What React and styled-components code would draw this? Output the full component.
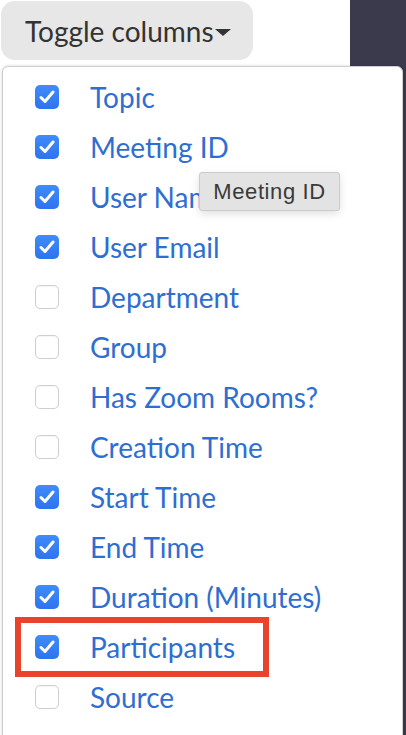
import React from "react";
import styled, { createGlobalStyle } from "styled-components";

const GlobalStyle = createGlobalStyle`
  html, body { margin: 0; padding: 0; background: #ffffff; }
  body { font-family: Lato, "Noto Sans", sans-serif; }
`;

const Page = styled.div`
  position: relative;
  display: flex;
  width: 406px;
  height: 735px;
  overflow: hidden;
  background: #ffffff;
`;

const Main = styled.div`
  flex: 1;
  display: flex;
  flex-direction: column;
  padding: 1px 0 0 1px;
`;

const Sidebar = styled.div`
  width: 56px;
  background: #3b3a4c;
`;

const ToggleButton = styled.button`
  display: flex;
  align-items: center;
  width: 252px;
  height: 59px;
  padding: 0 0 0 24px;
  border: none;
  border-radius: 14px;
  background: #e7e7e7;
  color: #333333;
  font-family: Lato, "Noto Sans", sans-serif;
  font-size: 28px;
  cursor: pointer;
`;

const Caret = styled.span`
  width: 0;
  height: 0;
  margin-left: 1px;
  margin-top: 3px;
  border-left: 8px solid transparent;
  border-right: 8px solid transparent;
  border-top: 7px solid #333333;
`;

const Menu = styled.ul`
  position: absolute;
  top: 66px;
  left: 2px;
  width: 399px;
  height: 680px;
  margin: 0;
  padding: 5px 0 0 0;
  list-style: none;
  background: #ffffff;
  border: 1px solid #cfcfcf;
  border-radius: 6px;
  box-shadow: 0 0 3px rgba(0, 0, 0, 0.18);
`;

const Item = styled.li`
  position: relative;
  display: flex;
  align-items: center;
  height: 50px;
  padding-left: 32px;
  gap: 31px;
  color: #2f6ed1;
  font-size: 28px;

  ${(p) =>
    p.$highlight &&
    `
    &::after {
      content: "";
      position: absolute;
      left: 12px;
      top: -5px;
      width: 242px;
      height: 48px;
      border: 6px solid #e9432b;
    }
  `}
`;

const Box = styled.span`
  display: flex;
  align-items: center;
  justify-content: center;
  flex: none;
  width: 24px;
  height: 24px;
  box-sizing: border-box;
  border-radius: 5px;
  background: ${(p) =>
    p.$checked ? "linear-gradient(#3f8cfa, #2f73ef)" : "#ffffff"};
  border: ${(p) => (p.$checked ? "none" : "1px solid #cfcfcf")};
  box-shadow: ${(p) =>
    p.$checked ? "none" : "inset 0 1px 1px rgba(0,0,0,0.04)"};
`;

const Label = styled.span`
  white-space: nowrap;
`;

const Tooltip = styled.div`
  position: absolute;
  left: 199px;
  top: 172px;
  width: 141px;
  height: 39px;
  box-sizing: border-box;
  display: flex;
  align-items: center;
  justify-content: center;
  background: #e3e3e3;
  border: 1px solid #cbcbcb;
  border-radius: 3px;
  box-shadow: 0 3px 8px rgba(0, 0, 0, 0.12);
  color: #3a3a3a;
  font-family: "Liberation Sans", Arial, sans-serif;
  font-size: 22px;
  letter-spacing: 0.6px;
`;

const Check = () => (
  <svg width="16" height="14" viewBox="0 0 16 14" fill="none">
    <path
      d="M2 7.5 L6 11.5 L14 2"
      stroke="#ffffff"
      strokeWidth="3"
      strokeLinecap="round"
      strokeLinejoin="round"
    />
  </svg>
);

const columns = [
  ["Topic", true],
  ["Meeting ID", true],
  ["User Name", true],
  ["User Email", true],
  ["Department", false],
  ["Group", false],
  ["Has Zoom Rooms?", false],
  ["Creation Time", false],
  ["Start Time", true],
  ["End Time", true],
  ["Duration (Minutes)", true],
  ["Participants", true],
  ["Source", false],
];

export default function App() {
  return (
    <>
      <GlobalStyle />
      <Page>
        <Main>
          <ToggleButton>
            Toggle columns
            <Caret />
          </ToggleButton>
        </Main>
        <Sidebar />
        <Menu>
          {columns.map(([name, checked]) => (
            <Item key={name} $highlight={name === "Participants"}>
              <Box $checked={checked}>{checked && <Check />}</Box>
              <Label>{name}</Label>
            </Item>
          ))}
        </Menu>
        <Tooltip>Meeting ID</Tooltip>
      </Page>
    </>
  );
}
